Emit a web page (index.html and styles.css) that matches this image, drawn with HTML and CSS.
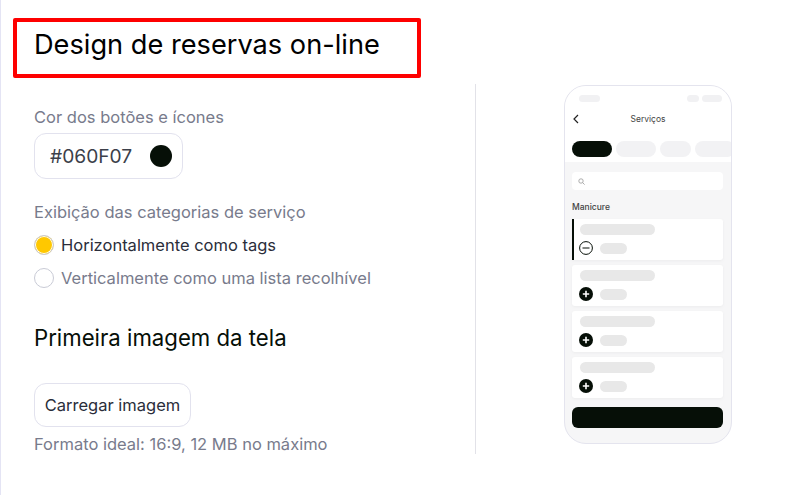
FILE: index.html
```html
<html>

<head>
    <meta http-equiv="Content-Type" content="text/html; charset=UTF-8">
    <link rel="stylesheet" href="styles.css">
</head>

<body>
    <div class="page">
        <div class="redBox"></div>
        <h1>Design de reservas on-line</h1>
        <div class="columns">
            <div class="settings">
                <div class="label">Cor dos botões e ícones</div>
                <div class="colorInput">
                    <span>#060F07</span>
                    <span class="colorDot"></span>
                </div>
                <div class="label categoryLabel">Exibição das categorias de serviço</div>
                <div class="radioRow selected"><span class="radio"></span>Horizontalmente como tags</div>
                <div class="radioRow"><span class="radio"></span>Verticalmente como uma lista recolhível</div>
                <h2>Primeira imagem da tela</h2>
                <button>Carregar imagem</button>
                <div class="hint">Formato ideal: 16:9, 12 MB no máximo</div>
            </div>
            <div class="previewPane">
                <div class="phone">
                    <div class="phoneTop">
                        <div class="statusBar">
                            <span class="statusPill wide"></span>
                            <span class="statusRight">
                                <span class="statusPill small"></span>
                                <span class="statusPill"></span>
                            </span>
                        </div>
                        <div class="phoneHeader">
                            <svg class="backIcon" width="6" height="10" viewBox="0 0 6 10">
                                <path d="M5 1 1 5l4 4" fill="none" stroke="#222" stroke-width="1.2" />
                            </svg>
                            <span>Serviços</span>
                        </div>
                        <div class="tags">
                            <span class="tag active"></span>
                            <span class="tag"></span>
                            <span class="tag short"></span>
                            <span class="tag last"></span>
                        </div>
                    </div>
                    <div class="phoneBody">
                        <div class="search">
                            <svg width="7" height="7" viewBox="0 0 7 7">
                                <circle cx="3" cy="3" r="2.2" fill="none" stroke="#999" stroke-width="0.8" />
                                <path d="M4.6 4.6 6.6 6.6" stroke="#999" stroke-width="0.8" />
                            </svg>
                        </div>
                        <div class="groupName">Manicure</div>
                        <div class="card current">
                            <div class="bar"></div>
                            <div class="cardRow">
                                <svg width="14" height="14" viewBox="0 0 14 14">
                                    <circle cx="7" cy="7" r="6.4" fill="#fff" stroke="#060f07" stroke-width="1" />
                                    <path d="M3.5 7h7" stroke="#060f07" stroke-width="1.2" />
                                </svg>
                                <span class="price"></span>
                            </div>
                        </div>
                        <div class="card">
                            <div class="bar"></div>
                            <div class="cardRow">
                                <svg width="14" height="14" viewBox="0 0 14 14">
                                    <circle cx="7" cy="7" r="7" fill="#060f07" />
                                    <path d="M3.8 7h6.4M7 3.8v6.4" stroke="#fff" stroke-width="1.6" />
                                </svg>
                                <span class="price"></span>
                            </div>
                        </div>
                        <div class="card">
                            <div class="bar"></div>
                            <div class="cardRow">
                                <svg width="14" height="14" viewBox="0 0 14 14">
                                    <circle cx="7" cy="7" r="7" fill="#060f07" />
                                    <path d="M3.8 7h6.4M7 3.8v6.4" stroke="#fff" stroke-width="1.6" />
                                </svg>
                                <span class="price"></span>
                            </div>
                        </div>
                        <div class="card">
                            <div class="bar"></div>
                            <div class="cardRow">
                                <svg width="14" height="14" viewBox="0 0 14 14">
                                    <circle cx="7" cy="7" r="7" fill="#060f07" />
                                    <path d="M3.8 7h6.4M7 3.8v6.4" stroke="#fff" stroke-width="1.6" />
                                </svg>
                                <span class="price"></span>
                            </div>
                        </div>
                        <div class="bookButton"></div>
                    </div>
                </div>
            </div>
        </div>
    </div>
</body>

</html>
```

FILE: styles.css
```css
body {
    margin: 0;
    font-family: Inter, "Liberation Sans", sans-serif;
    color: #060f07;
    background: #fff;
}

.page {
    position: relative;
    box-sizing: border-box;
    height: 495px;
    overflow: hidden;
    padding: 0 0 0 34px;
    border-left: 1px solid #e4e4f4;
}

.redBox {
    position: absolute;
    left: 12px;
    top: 18px;
    width: 400px;
    height: 52px;
    border: 4px solid #fe0000;
    border-radius: 2px;
}

h1 {
    margin: 0;
    padding-top: 29px;
    margin-left: -1px;
    font-size: 27.2px;
    line-height: 32px;
    font-weight: 400;
    color: #000;
}

.columns {
    display: flex;
    margin-top: 23px;
    margin-left: -1px;
}

.settings {
    width: 442px;
    height: 370px;
    box-sizing: border-box;
    border-right: 1px solid #e2e2e8;
    padding-top: 21px;
}

.label {
    font-size: 16.5px;
    line-height: 24px;
    color: #787b8c;
}

.colorInput {
    box-sizing: border-box;
    width: 149px;
    height: 46px;
    margin-top: 4px;
    padding: 0 10px 0 15px;
    display: flex;
    align-items: center;
    justify-content: space-between;
    border: 1px solid #e2e2ee;
    border-radius: 12px;
    font-size: 19.2px;
    color: #3c3f4a;
}

.colorDot {
    width: 22px;
    height: 22px;
    border-radius: 50%;
    background: #060f07;
}

.categoryLabel {
    margin-top: 21px;
}

.radioRow {
    display: flex;
    align-items: center;
    gap: 7px;
    height: 33px;
    font-size: 16.5px;
    color: #787b8c;
}

.radioRow.selected {
    margin-top: 4px;
    color: #2a2d3a;
}

.radio {
    box-sizing: border-box;
    width: 20px;
    height: 20px;
    border: 1.5px solid #c9cbd6;
    border-radius: 50%;
    background: #fff;
}

.selected .radio {
    background: #ffc800;
    box-shadow: inset 0 0 0 1px #fff;
}

h2 {
    margin: 30px 0 0 0;
    font-size: 22.2px;
    line-height: 28px;
    font-weight: 400;
    color: #060f07;
}

button {
    display: block;
    box-sizing: border-box;
    width: 157px;
    height: 44px;
    margin-top: 31px;
    padding: 0;
    background: #fff;
    border: 1px solid #e2e2ee;
    border-radius: 12px;
    font-family: inherit;
    font-size: 16.5px;
    color: #2a2d3a;
}

.hint {
    margin-top: 5px;
    font-size: 16.5px;
    line-height: 24px;
    color: #787b8c;
}

.previewPane {
    padding: 1px 0 0 88px;
}

.phone {
    box-sizing: border-box;
    width: 168px;
    height: 359px;
    display: flex;
    flex-direction: column;
    overflow: hidden;
    border: 1px solid #e4e4ee;
    border-radius: 22px;
    background: #f6f6f7;
}

.phoneTop {
    height: 76px;
    background: #fff;
}

.statusBar {
    display: flex;
    justify-content: space-between;
    padding: 9px 9px 0 14px;
}

.statusRight {
    display: flex;
    gap: 3px;
}

.statusPill {
    width: 20px;
    height: 7px;
    border-radius: 4px;
    background: #f1f1f3;
}

.statusPill.wide {
    width: 21px;
}

.statusPill.small {
    width: 12px;
}

.phoneHeader {
    position: relative;
    margin-top: 10px;
    height: 14px;
    text-align: center;
    font-size: 8.5px;
    line-height: 14px;
    color: #444;
}

.backIcon {
    position: absolute;
    left: 8px;
    top: 2px;
}

.tags {
    display: flex;
    gap: 4px;
    margin-top: 15px;
    padding-left: 6px;
}

.tag {
    flex: none;
    width: 40px;
    height: 16px;
    border-radius: 8px;
    background: #f2f2f4;
}

.tag.active {
    margin-left: 1px;
    background: #060f07;
}

.tag.short {
    width: 31px;
}

.phoneBody {
    padding: 10px 8px 0 7px;
}

.search {
    display: flex;
    align-items: center;
    height: 18px;
    padding-left: 6px;
    background: #fff;
    border-radius: 4px;
}

.groupName {
    margin: 10px 0 5px 0;
    font-size: 8.5px;
    line-height: 14px;
    font-weight: 500;
    color: #444;
}

.card {
    box-sizing: border-box;
    height: 41px;
    margin-bottom: 5px;
    padding: 5px 0 0 8px;
    background: #fff;
    border-radius: 3px;
    box-shadow: 0 1px 3px #ececee;
}

.card.current {
    padding-left: 6px;
    border-left: 2px solid #060f07;
    border-radius: 0 3px 3px 0;
}

.bar {
    width: 75px;
    height: 11px;
    border-radius: 6px;
    background: #e8e8e8;
}

.cardRow {
    display: flex;
    align-items: center;
    gap: 7px;
    margin-top: 6px;
    margin-left: -1px;
}

.price {
    width: 27px;
    height: 11px;
    border-radius: 6px;
    background: #e8e8e8;
}

.bookButton {
    height: 21px;
    margin-top: 9px;
    border-radius: 6px;
    background: #060f07;
}
```
